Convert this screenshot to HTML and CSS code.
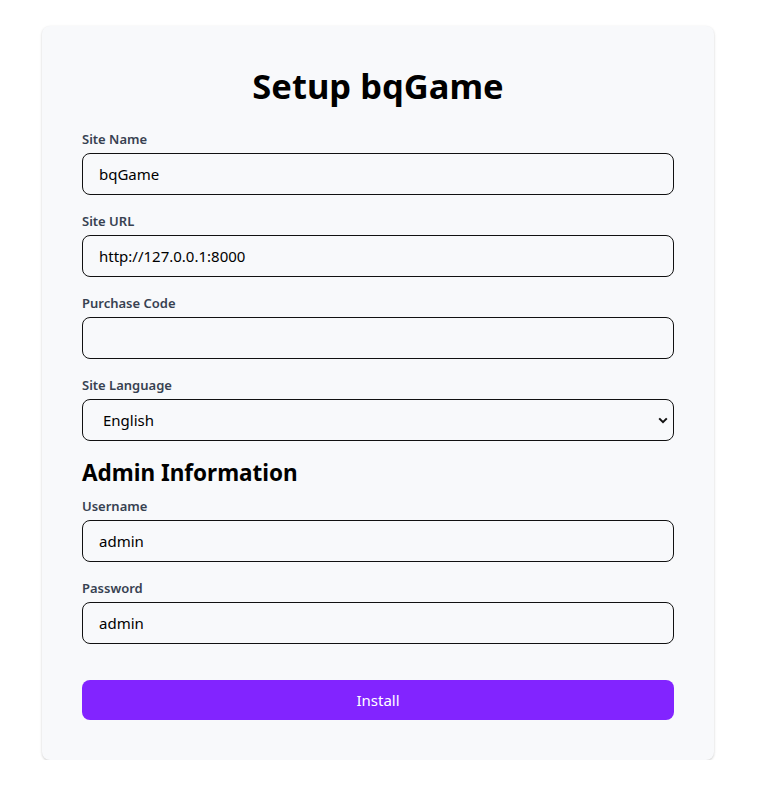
FILE: index.html
```html
<!DOCTYPE html>
<html>
<head>
<meta charset="utf-8">
<link rel="stylesheet" href="styles.css">
</head>
<body>
<div class="card">
  <h1 class="title">Setup bqGame</h1>
  <div class="field">
    <label class="label">Site Name</label>
    <input class="input" type="text" value="bqGame">
  </div>
  <div class="field">
    <label class="label">Site URL</label>
    <input class="input" type="text" value="http://127.0.0.1:8000">
  </div>
  <div class="field">
    <label class="label">Purchase Code</label>
    <input class="input" type="text" value="">
  </div>
  <div class="field">
    <label class="label">Site Language</label>
    <div class="select-wrap">
      <select class="input select">
        <option>English</option>
      </select>
      <svg class="chev" width="10" height="7" viewBox="0 0 10 7"><path d="M1.2 1.4 L5 5.2 L8.8 1.4" fill="none" stroke="#111" stroke-width="2"/></svg>
    </div>
  </div>
  <h2 class="subtitle">Admin Information</h2>
  <div class="field">
    <label class="label">Username</label>
    <input class="input" type="text" value="admin">
  </div>
  <div class="field">
    <label class="label">Password</label>
    <input class="input" type="text" value="admin">
  </div>
  <button class="btn">Install</button>
</div>
</body>
</html>
```
FILE: styles.css
```css
* { box-sizing: border-box; }
html, body { margin: 0; padding: 0; background: #fff; }
body {
  font-family: "Noto Sans", "Open Sans", sans-serif;
  padding-top: 26px;
}
.card {
  width: 672px;
  margin-left: 42px;
  background: #f8f9fb;
  border-radius: 8px;
  box-shadow: 0 1px 3px rgba(0,0,0,0.12), 0 1px 2px rgba(0,0,0,0.08);
  padding: 40px;
}
.title {
  margin: 0 0 23px;
  text-align: center;
  font-size: 34.5px;
  line-height: 40px;
  font-weight: 700;
  color: #000;
}
.field {
  display: flex;
  flex-direction: column;
  margin-bottom: 16px;
}
.label {
  font-size: 13px;
  line-height: 20px;
  font-weight: 600;
  color: #374151;
  margin-bottom: 4px;
}
.input {
  width: 100%;
  height: 42px;
  border: 1px solid #111;
  border-radius: 8px;
  background: #f8f9fb;
  padding: 0 16px;
  font-family: inherit;
  font-size: 15px;
  color: #000;
  outline: none;
}
.select-wrap { position: relative; }
.select {
  appearance: none;
  -webkit-appearance: none;
  padding-left: 20px;
}
.chev {
  position: absolute;
  right: 6px;
  top: 18px;
}
.subtitle {
  margin: 0 0 7px;
  font-size: 22.5px;
  line-height: 32px;
  font-weight: 700;
  color: #000;
}
.btn {
  display: block;
  width: 100%;
  height: 40px;
  margin-top: 36px;
  border: none;
  border-radius: 8px;
  background: #8224ff;
  color: #fff;
  font-family: inherit;
  font-size: 15px;
}
```
